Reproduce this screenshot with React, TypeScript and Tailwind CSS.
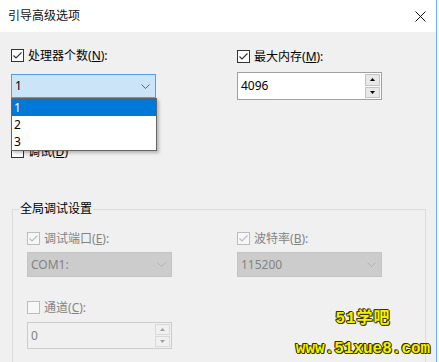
import React from "react";

function Check({ checked, disabled }: { checked: boolean; disabled?: boolean }) {
  const stroke = disabled ? "#bcbcbc" : "#333333";
  return (
    <div
      className={
        "w-[13px] h-[13px] shrink-0 border flex items-center justify-center " +
        (disabled ? "border-[#bcbcbc] bg-[#f7f7f7]" : "border-[#333333] bg-white")
      }
    >
      {checked && (
        <svg width="11" height="11" viewBox="0 0 11 11">
          <path d="M1.5 5.5 L4 8 L9.5 2.5" fill="none" stroke={stroke} strokeWidth="1.1" />
        </svg>
      )}
    </div>
  );
}

function Chevron({ color }: { color: string }) {
  return (
    <svg width="9" height="5" viewBox="0 0 9 5">
      <path d="M0.5 0.5 L4.5 4.5 L8.5 0.5" fill="none" stroke={color} strokeWidth="1" />
    </svg>
  );
}

function Spin({ disabled }: { disabled?: boolean }) {
  const c = disabled ? "#a0a0a0" : "#000000";
  return (
    <div className="w-[17px] h-full flex flex-col gap-[1px] p-[1px]">
      <div
        className={
          "flex-1 flex items-center justify-center border " +
          (disabled ? "border-[#d9d9d9] bg-[#f0f0f0]" : "border-[#c4c4c4] bg-[#e8e8e8]")
        }
      >
        <svg width="5" height="3" viewBox="0 0 5 3">
          <path d="M0 3 L2.5 0 L5 3 Z" fill={c} />
        </svg>
      </div>
      <div
        className={
          "flex-1 flex items-center justify-center border " +
          (disabled ? "border-[#d9d9d9] bg-[#f0f0f0]" : "border-[#c4c4c4] bg-[#e8e8e8]")
        }
      >
        <svg width="5" height="3" viewBox="0 0 5 3">
          <path d="M0 0 L5 0 L2.5 3 Z" fill={c} />
        </svg>
      </div>
    </div>
  );
}

function Label({
  text,
  m,
  disabled,
}: {
  text: string;
  m: string;
  disabled?: boolean;
}) {
  return (
    <span
      className={
        "ml-[4px] text-[12px] leading-[14px] whitespace-nowrap " +
        (disabled ? "text-[#838383]" : "text-black")
      }
    >
      {text}(<span className="underline underline-offset-[1px]">{m}</span>):
    </span>
  );
}

export default function App() {
  return (
    <div className="w-[439px] h-[362px] flex overflow-hidden font-['Noto_Sans','Noto_Sans_CJK_SC',sans-serif]">
      <div className="relative w-[436px] h-full bg-[#f0f0f0] flex flex-col">
        {/* Title bar */}
        <div className="h-[32px] bg-white flex items-center justify-between pl-[8px] pr-[10px] shrink-0">
          <span className="text-[12px] leading-[16px] text-[#111]">引导高级选项</span>
          <svg width="11" height="11" viewBox="0 0 11 11">
            <path d="M0.5 0.5 L10.5 10.5 M10.5 0.5 L0.5 10.5" stroke="#111" strokeWidth="1" />
          </svg>
        </div>

        {/* Body */}
        <div className="px-[11px] pt-[17px]">
          <div className="grid grid-cols-[226px_1fr]">
            <div className="flex flex-col">
              <div className="flex items-center h-[13px]">
                <Check checked />
                <Label text="处理器个数" m="N" />
              </div>
              <div className="mt-[12px] w-[145px] h-[24px] border border-[#569de5] bg-[#cce4f7] flex items-center justify-between pl-[3px] pr-[5px]">
                <span className="text-[12px] leading-[14px] text-black">1</span>
                <Chevron color="#606060" />
              </div>
              <div className="mt-[47px] flex items-center h-[13px]">
                <Check checked={false} />
                <span className="ml-[4px] text-[12px] leading-[14px] text-black">
                  调试(<span className="underline">D</span>)
                </span>
              </div>
            </div>
            <div className="flex flex-col">
              <div className="mt-[1px] flex items-center h-[13px]">
                <Check checked />
                <Label text="最大内存" m="M" />
              </div>
              <div className="mt-[9px] w-[145px] h-[28px] border border-[#a0a0a0] bg-white flex items-stretch">
                <div className="flex-1 flex items-center pl-[3px] text-[12px] leading-[14px] text-black">
                  4096
                </div>
                <Spin />
              </div>
            </div>
          </div>

          {/* Group box */}
          <fieldset className="mt-[43px] ml-[1px] w-[414px] h-[200px] border border-[#dcdcdc] px-0">
            <legend className="ml-[6px] px-[1px] text-[12px] leading-[16px] text-black">全局调试设置</legend>
            <div className="pl-[14px] pt-[15px] grid grid-cols-[210px_1fr]">
              <div className="flex flex-col">
                <div className="flex items-center h-[13px]">
                  <Check checked disabled />
                  <Label text="调试端口" m="E" disabled />
                </div>
                <div className="mt-[7px] w-[145px] h-[25px] border border-[#c4c4c4] bg-[#cccccc] flex items-center justify-between pl-[3px] pr-[5px]">
                  <span className="text-[12px] leading-[14px] text-[#838383]">COM1:</span>
                  <Chevron color="#b3b3b3" />
                </div>
                <div className="mt-[24px] flex items-center h-[13px]">
                  <Check checked={false} disabled />
                  <Label text="通道" m="C" disabled />
                </div>
                <div className="mt-[8px] w-[145px] h-[27px] border border-[#cccccc] bg-[#f0f0f0] flex items-stretch">
                  <div className="flex-1 flex items-center pl-[3px] text-[12px] leading-[14px] text-[#838383]">
                    0
                  </div>
                  <Spin disabled />
                </div>
              </div>
              <div className="flex flex-col">
                <div className="flex items-center h-[13px]">
                  <Check checked disabled />
                  <Label text="波特率" m="B" disabled />
                </div>
                <div className="mt-[7px] w-[145px] h-[25px] border border-[#c4c4c4] bg-[#cccccc] flex items-center justify-between pl-[3px] pr-[5px]">
                  <span className="text-[12px] leading-[14px] text-[#838383]">115200</span>
                  <Chevron color="#b3b3b3" />
                </div>
              </div>
            </div>
          </fieldset>
        </div>

        {/* Dropdown list overlay */}
        <div className="absolute left-[11px] top-[98px] w-[146px] h-[53px] border border-[#646464] bg-white shadow-[2px_2px_3px_rgba(0,0,0,0.25)] flex flex-col">
          <div className="h-[17px] bg-[#0078d7] text-white text-[12px] leading-[17px] pl-[2px]">1</div>
          <div className="h-[17px] text-black text-[12px] leading-[17px] pl-[2px]">2</div>
          <div className="h-[17px] text-black text-[12px] leading-[17px] pl-[2px]">3</div>
        </div>

        {/* Watermark overlay */}
        <div className="absolute left-[292px] top-[310px] w-[142px] flex flex-col items-center font-['Liberation_Mono','Noto_Sans_CJK_SC',monospace] font-bold text-[#f2f200] [text-shadow:1px_0_#3a3300,-1px_0_#3a3300,0_1px_#3a3300,0_-1px_#3a3300,1px_1px_#3a3300,-1px_-1px_#3a3300]">
          <span className="text-[16px] leading-[18px] tracking-[1px]">51学吧</span>
          <span className="mt-[12px] text-[16px] leading-[18px]">www.51xue8.com</span>
        </div>
      </div>
      <div className="w-[1px] h-full bg-[#6cb4e8]" />
      <div className="w-[2px] h-full bg-white" />
    </div>
  );
}
